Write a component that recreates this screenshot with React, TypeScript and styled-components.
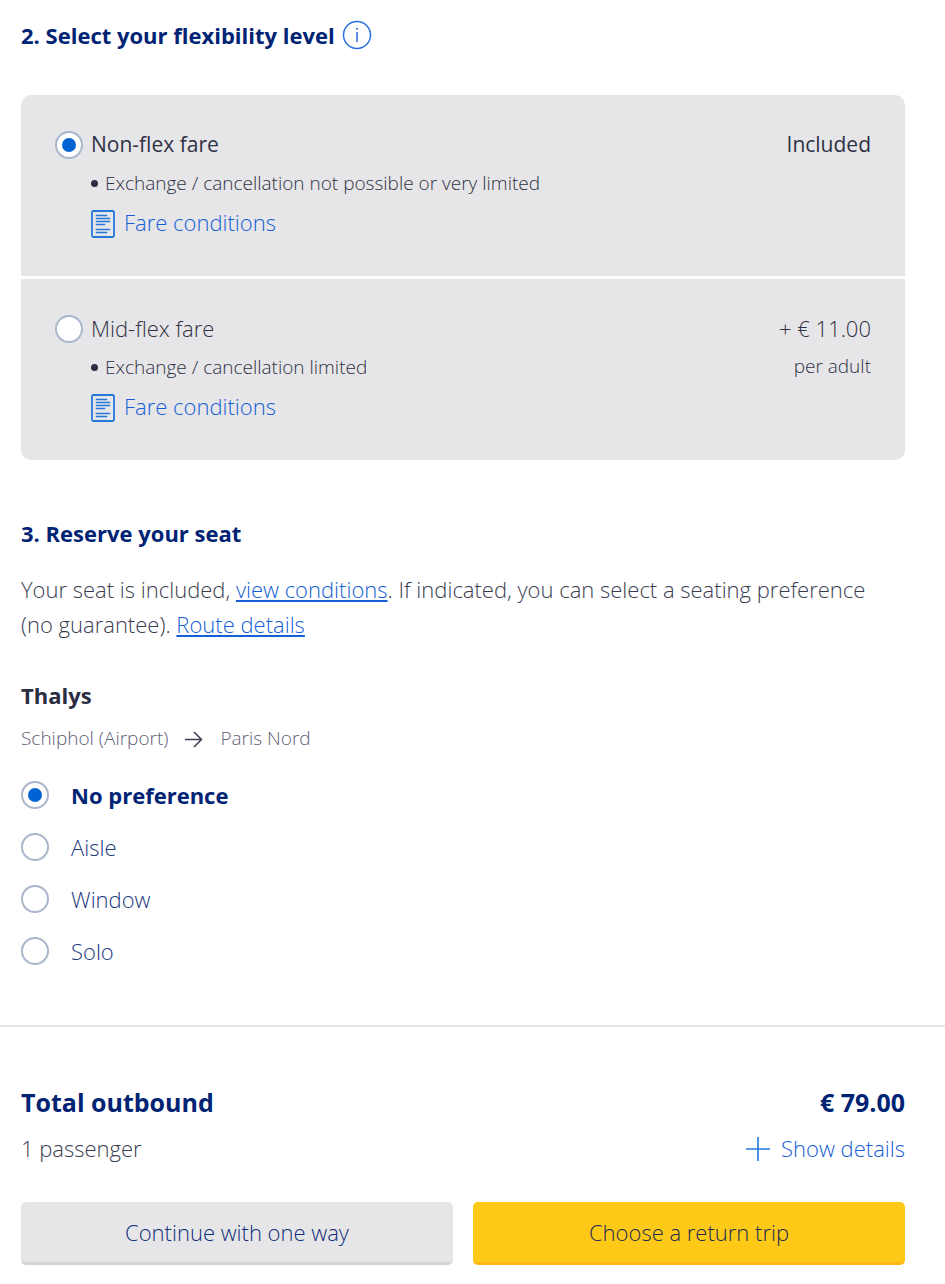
import React, { useState } from "react";
import styled, { createGlobalStyle } from "styled-components";

const GlobalStyle = createGlobalStyle`
  * { box-sizing: border-box; }
  body {
    margin: 0;
    background: #fff;
    color: #3a3d50;
    font-family: "Open Sans", "Noto Sans", sans-serif;
    font-size: 22px;
    font-weight: 300;
    line-height: 36px;
  }
  h2, h3, p, ul, fieldset { margin: 0; padding: 0; border: 0; }
`;

const Section = styled.section<{ $top: number }>`
  padding: ${(p) => p.$top}px 40px 0 21px;
`;

const Heading = styled.h2`
  display: flex;
  align-items: center;
  gap: 7px;
  color: #002374;
  font-size: 22px;
  font-weight: 700;
`;

const IconButton = styled.button`
  display: flex;
  padding: 0;
  border: 0;
  background: none;
  cursor: pointer;
`;

const FareList = styled.fieldset`
  display: flex;
  flex-direction: column;
  gap: 3px;
  margin-top: 42px;
  border-radius: 10px;
  overflow: hidden;
`;

const FareRow = styled.div`
  display: flex;
  align-items: flex-start;
  justify-content: space-between;
  padding: 30px 34px 34px;
  background: #e6e6e8;
`;

const FareMain = styled.div`
  display: grid;
  grid-template-columns: 28px 1fr;
  column-gap: 8px;
  line-height: 39px;
`;

const FareName = styled.label<{ $strong: boolean }>`
  color: #2f3145;
  font-size: ${(p) => (p.$strong ? 21 : 22)}px;
  font-weight: ${(p) => (p.$strong ? 500 : 300)};
`;

const FareDetails = styled.div`
  grid-column: 2;
`;

const Bullets = styled.ul`
  color: #2f3145;
  list-style: none;
  font-size: 19px;
  li {
    display: flex;
    align-items: center;
    gap: 7px;
  }
  li::before {
    content: "";
    width: 7px;
    height: 7px;
    border-radius: 50%;
    background: #2b2d42;
  }
`;

const Link = styled.a<{ $plain?: boolean }>`
  color: #1560d4;
  text-decoration: ${(p) => (p.$plain ? "none" : "underline")};
  text-decoration-thickness: 2px;
  text-underline-offset: 2px;
  text-decoration-skip-ink: none;
`;

const IconLink = styled(Link)`
  display: flex;
  align-items: center;
  gap: 9px;
`;

const FarePrice = styled.div<{ $strong: boolean }>`
  text-align: right;
  color: #2f3145;
  font-size: ${(p) => (p.$strong ? 21 : 22)}px;
  font-weight: ${(p) => (p.$strong ? 500 : 300)};
  line-height: 39px;
`;

const PriceNote = styled.div`
  font-size: 19px;
  line-height: 36px;
`;

const Radio = styled.input.attrs({ type: "radio" })`
  appearance: none;
  display: grid;
  place-items: center;
  flex: none;
  align-self: center;
  width: 28px;
  height: 28px;
  margin: 0;
  border: 2px solid #abb5cc;
  border-radius: 50%;
  background: #fff;
  &:checked::before {
    content: "";
    width: 14px;
    height: 14px;
    border-radius: 50%;
    background: #0063d3;
  }
`;

const Paragraph = styled.p`
  margin-top: 21px;
  padding-right: 12px;
  line-height: 35px;
`;

const TrainName = styled.h3`
  margin-top: 35px;
  color: #2b2d42;
  font-size: 22px;
  font-weight: 700;
`;

const Route = styled.p`
  display: flex;
  align-items: center;
  gap: 17px;
  margin-top: 7px;
  color: #5f6175;
  font-size: 19px;
`;

const SeatOptions = styled.fieldset`
  margin-top: 13px;
`;

const SeatOption = styled.label<{ $strong: boolean }>`
  display: flex;
  align-items: center;
  gap: 22px;
  height: 52px;
  color: ${(p) => (p.$strong ? "#002374" : "#1b387e")};
  font-weight: ${(p) => (p.$strong ? 700 : 300)};
`;

const Divider = styled.hr`
  height: 2px;
  margin: 48px 0 0;
  border: 0;
  background: #e6e6e8;
`;

const SummaryRow = styled.div`
  display: flex;
  align-items: center;
  justify-content: space-between;
  margin-bottom: 8px;
`;

const Total = styled.span`
  color: #002374;
  font-size: 25px;
  font-weight: 700;
  line-height: 40px;
`;

const DetailsButton = styled(IconButton)`
  align-items: center;
  gap: 11px;
  color: #1560d4;
  font: inherit;
`;

const Actions = styled.div`
  display: grid;
  grid-template-columns: 1fr 1fr;
  gap: 20px;
  padding: 28px 0 19px;
`;

const ActionButton = styled.button<{ $primary?: boolean }>`
  height: 63px;
  padding: 0 16px;
  border: 0;
  border-bottom: 3px solid ${(p) => (p.$primary ? "#ffb714" : "#d4d4d6")};
  border-radius: 5px;
  background: ${(p) => (p.$primary ? "#ffc917" : "#e6e6e8")};
  color: ${(p) => (p.$primary ? "#212c52" : "#0f2e78")};
  font: inherit;
  cursor: pointer;
`;

const InfoIcon = () => (
  <svg width="30" height="30" viewBox="0 0 30 30" fill="none" stroke="#2a70dc" aria-hidden="true">
    <circle cx="15" cy="15" r="13.5" strokeWidth="1.5" />
    <path d="M15 12v10" strokeWidth="1.5" />
    <circle cx="15" cy="8.8" r="1" fill="#2a70dc" stroke="none" />
  </svg>
);

const DocumentIcon = () => (
  <svg width="24" height="30" viewBox="0 0 24 30" fill="none" stroke="#2478dc" strokeLinecap="round" aria-hidden="true">
    <rect x="1" y="3" width="22" height="26" rx="1.5" strokeWidth="1.8" />
    <path d="M5.5 7.5h10M5.5 10.5h13M5.5 13.5h13M5.5 16.5h8M5.5 21.5h13M5.5 24.5h10" strokeWidth="1.7" />
  </svg>
);

const ArrowIcon = () => (
  <svg width="18" height="20" viewBox="0 0 18 20" fill="none" stroke="#3c3e51" strokeWidth="1.5" aria-hidden="true">
    <path d="M0 11.5h16.5M9 4l7.5 7.5L9 19" />
  </svg>
);

const PlusIcon = () => (
  <svg width="24" height="26" viewBox="0 0 24 26" stroke="#2478dc" strokeWidth="1.6" aria-hidden="true">
    <path d="M0 14h24M12 2v24" />
  </svg>
);

const fares = [
  { id: "non-flex", name: "Non-flex fare", terms: "Exchange / cancellation not possible or very limited", price: "Included", note: "" },
  { id: "mid-flex", name: "Mid-flex fare", terms: "Exchange / cancellation limited", price: "+ € 11.00", note: "per adult" },
];

const seats = ["No preference", "Aisle", "Window", "Solo"];

export default function App() {
  const [fare, setFare] = useState("non-flex");
  const [seat, setSeat] = useState("No preference");

  return (
    <main>
      <GlobalStyle />
      <Section $top={17}>
        <Heading>
          2. Select your flexibility level
          <IconButton type="button" aria-label="More information">
            <InfoIcon />
          </IconButton>
        </Heading>
        <FareList aria-label="Flexibility level">
          {fares.map((f) => (
            <FareRow key={f.id}>
              <FareMain>
                <Radio id={f.id} name="fare" checked={fare === f.id} onChange={() => setFare(f.id)} />
                <FareName htmlFor={f.id} $strong={fare === f.id}>{f.name}</FareName>
                <FareDetails>
                  <Bullets>
                    <li>{f.terms}</li>
                  </Bullets>
                  <IconLink href="#fare-conditions" $plain>
                    <DocumentIcon />
                    Fare conditions
                  </IconLink>
                </FareDetails>
              </FareMain>
              <FarePrice $strong={fare === f.id}>
                {f.price}
                {f.note && <PriceNote>{f.note}</PriceNote>}
              </FarePrice>
            </FareRow>
          ))}
        </FareList>
      </Section>

      <Section $top={55}>
        <Heading>3. Reserve your seat</Heading>
        <Paragraph>
          Your seat is included, <Link href="#conditions">view conditions</Link>. If indicated, you can select a
          seating preference (no guarantee). <Link href="#route">Route details</Link>
        </Paragraph>
        <TrainName>Thalys</TrainName>
        <Route>
          <span>Schiphol (Airport)</span>
          <ArrowIcon />
          <span>Paris Nord</span>
        </Route>
        <SeatOptions aria-label="Seating preference">
          {seats.map((s) => (
            <SeatOption key={s} $strong={seat === s}>
              <Radio name="seat" checked={seat === s} onChange={() => setSeat(s)} />
              {s}
            </SeatOption>
          ))}
        </SeatOptions>
      </Section>

      <Divider />

      <Section $top={55}>
        <SummaryRow>
          <Total>Total outbound</Total>
          <Total>€ 79.00</Total>
        </SummaryRow>
        <SummaryRow>
          <span>1 passenger</span>
          <DetailsButton type="button">
            <PlusIcon />
            Show details
          </DetailsButton>
        </SummaryRow>
        <Actions>
          <ActionButton type="button">Continue with one way</ActionButton>
          <ActionButton type="button" $primary>Choose a return trip</ActionButton>
        </Actions>
      </Section>
    </main>
  );
}
